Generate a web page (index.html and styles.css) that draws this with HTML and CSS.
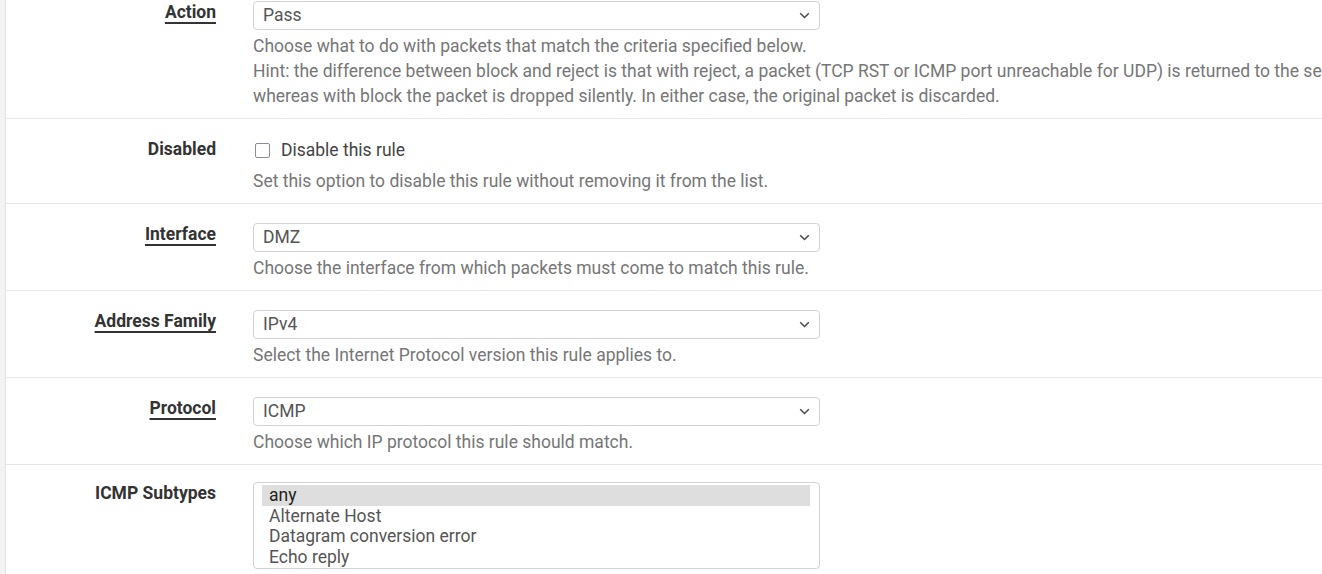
FILE: index.html
```html
<!DOCTYPE html>
<html lang="en">
<head>
<meta charset="utf-8">
<title>Edit Firewall Rule</title>
<link rel="stylesheet" href="styles.css">
</head>
<body>
<div class="page">
  <form class="panel">
    <div class="row">
      <div class="label"><span class="req">Action</span></div>
      <div class="field">
        <div class="select"><span>Pass</span><svg class="chev" width="11" height="7" viewBox="0 0 11 7"><path d="M1.2 1.2l4.3 4.3 4.3-4.3" fill="none" stroke="#4a4a4a" stroke-width="1.5"/></svg></div>
        <div class="help">Choose what to do with packets that match the criteria specified below.<br>Hint: the difference between block and reject is that with reject, a packet (TCP RST or ICMP port unreachable for UDP) is returned to the sender, whereas with block the packet is dropped silently. In either case, the original packet is discarded.</div>
      </div>
    </div>
    <div class="row">
      <div class="label"><span>Disabled</span></div>
      <div class="field">
        <label class="check"><span class="box"></span>Disable this rule</label>
        <div class="help help-check">Set this option to disable this rule without removing it from the list.</div>
      </div>
    </div>
    <div class="row">
      <div class="label"><span class="req">Interface</span></div>
      <div class="field">
        <div class="select"><span>DMZ</span><svg class="chev" width="11" height="7" viewBox="0 0 11 7"><path d="M1.2 1.2l4.3 4.3 4.3-4.3" fill="none" stroke="#4a4a4a" stroke-width="1.5"/></svg></div>
        <div class="help">Choose the interface from which packets must come to match this rule.</div>
      </div>
    </div>
    <div class="row">
      <div class="label"><span class="req">Address Family</span></div>
      <div class="field">
        <div class="select"><span>IPv4</span><svg class="chev" width="11" height="7" viewBox="0 0 11 7"><path d="M1.2 1.2l4.3 4.3 4.3-4.3" fill="none" stroke="#4a4a4a" stroke-width="1.5"/></svg></div>
        <div class="help">Select the Internet Protocol version this rule applies to.</div>
      </div>
    </div>
    <div class="row">
      <div class="label"><span class="req">Protocol</span></div>
      <div class="field">
        <div class="select"><span>ICMP</span><svg class="chev" width="11" height="7" viewBox="0 0 11 7"><path d="M1.2 1.2l4.3 4.3 4.3-4.3" fill="none" stroke="#4a4a4a" stroke-width="1.5"/></svg></div>
        <div class="help">Choose which IP protocol this rule should match.</div>
      </div>
    </div>
    <div class="row row-last">
      <div class="label"><span>ICMP Subtypes</span></div>
      <div class="field">
        <div class="listbox">
          <div class="opt opt-sel">any</div>
          <div class="opt">Alternate Host</div>
          <div class="opt">Datagram conversion error</div>
          <div class="opt">Echo reply</div>
        </div>
      </div>
    </div>
  </form>
</div>
</body>
</html>
```
FILE: styles.css
```css
html, body {
  margin: 0;
  padding: 0;
  overflow: hidden;
}
body {
  background: #f3f3f3;
  font-family: Roboto, "Liberation Sans", sans-serif;
  font-size: 17.5px;
  color: #333;
}
.page {
  width: 1900px;
  padding-left: 5px;
}
.panel {
  background: #fff;
  border-left: 1px solid #e3e3e3;
  margin-top: -18px;
}
.row {
  display: flex;
  gap: 37px;
  padding: 19px 0 9px;
  border-bottom: 1px solid #e6e6e6;
}
.row-last {
  border-bottom: none;
  padding-top: 17px;
  padding-bottom: 20px;
}
.label {
  width: 210px;
  flex: none;
  text-align: right;
  font-weight: 700;
  line-height: 20px;
  padding-top: 1px;
  color: #333;
}
.req {
  text-decoration: underline;
  text-decoration-thickness: 2px;
  text-underline-offset: 4px;
}
.field {
  flex: 1;
}
.select {
  width: 567px;
  height: 29px;
  box-sizing: border-box;
  border: 1px solid #d2d2d2;
  border-radius: 4px;
  display: flex;
  align-items: center;
  justify-content: space-between;
  padding: 0 9px 0 9px;
  color: #555;
  line-height: 27px;
}
.chev {
  display: block;
}
.help {
  max-width: 1140px;
  margin-top: 4px;
  line-height: 25px;
  color: #767676;
}
.help-check {
  margin-top: 6px;
}
.check {
  display: flex;
  align-items: center;
  gap: 11px;
  line-height: 25px;
  color: #444;
  padding-left: 2px;
}
.box {
  width: 13px;
  height: 13px;
  border: 1.5px solid #8b8b9b;
  border-radius: 2px;
  background: #fff;
  flex: none;
}
.listbox {
  width: 567px;
  box-sizing: border-box;
  border: 1px solid #d2d2d2;
  border-radius: 4px;
  padding: 2px 9px 1px 8px;
}
.opt {
  line-height: 20.5px;
  padding-left: 7px;
  color: #555;
}
.opt-sel {
  background: #dedede;
  color: #222;
}
```
